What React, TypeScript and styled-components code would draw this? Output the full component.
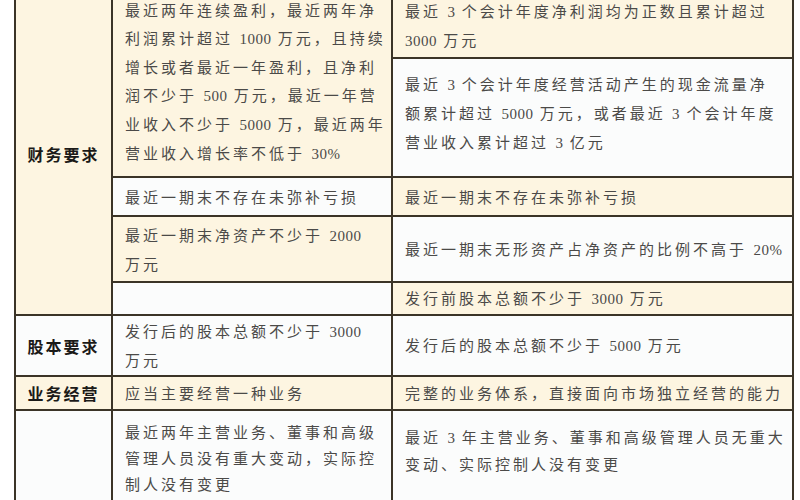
import React from "react";
import styled, { createGlobalStyle } from "styled-components";

const GlobalStyle = createGlobalStyle`
  html, body {
    margin: 0;
    padding: 0;
    background: #ffffff;
    overflow: hidden;
  }
  body {
    width: 800px;
    height: 500px;
    font-family: "Noto Sans CJK SC", "Noto Sans", sans-serif;
  }
`;

const Page = styled.div`
  width: 800px;
  height: 500px;
  overflow: hidden;
  padding-left: 14px;
  box-sizing: border-box;
`;

const Table = styled.table`
  margin-top: -8px;
  border-collapse: collapse;
  table-layout: fixed;
  width: 778px;
`;

const Row = styled.tr<{ $h: number }>`
  height: ${(p) => p.$h}px;
`;

const Cell = styled.td<{ $tone?: "beige" | "white"; $pb?: number; $lh?: number }>`
  border: 2px solid #3b3427;
  background: ${(p) => (p.$tone === "beige" ? "#fdf5e1" : "#fbfcfc")};
  padding: 0 4px ${(p) => p.$pb ?? 0}px 12px;
  vertical-align: middle;
  white-space: nowrap;
  overflow: hidden;
  color: #4b4a48;
  font-size: 15px;
  letter-spacing: 3px;
  line-height: ${(p) => p.$lh ?? 28}px;
`;

const HeadCell = styled(Cell)`
  padding: 0;
  text-align: center;
  color: #1b1a18;
  font-weight: 700;
  font-size: 16px;
  letter-spacing: 2px;
`;

const Num = styled.span`
  font-family: "Liberation Serif", "DejaVu Serif", serif;
  font-size: 15px;
  letter-spacing: 0.5px;
`;

const Lines: React.FC<{ lines: React.ReactNode[] }> = ({ lines }) => (
  <>
    {lines.map((l, i) => (
      <div key={i}>{l}</div>
    ))}
  </>
);

export default function App() {
  return (
    <>
      <GlobalStyle />
      <Page>
        <Table>
          <colgroup>
            <col style={{ width: 97 }} />
            <col style={{ width: 280 }} />
            <col style={{ width: 401 }} />
          </colgroup>
          <tbody>
            <Row $h={65}>
              <HeadCell rowSpan={5} $tone="beige">
                财务要求
              </HeadCell>
              <Cell rowSpan={2} $tone="beige" $pb={6}>
                <Lines
                  lines={[
                    "最近两年连续盈利，最近两年净",
                    <>利润累计超过 <Num>1000</Num> 万元，且持续</>,
                    "增长或者最近一年盈利，且净利",
                    <>润不少于 <Num>500</Num> 万元，最近一年营</>,
                    <>业收入不少于 <Num>5000</Num> 万，最近两年</>,
                    <>营业收入增长率不低于 <Num>30%</Num></>,
                  ]}
                />
              </Cell>
              <Cell $tone="beige">
                <Lines
                  lines={[
                    <>最近 <Num>3</Num> 个会计年度净利润均为正数且累计超过</>,
                    <><Num>3000</Num> 万元</>,
                  ]}
                />
              </Cell>
            </Row>
            <Row $h={119}>
              <Cell $tone="white" $pb={8}>
                <Lines
                  lines={[
                    <>最近 <Num>3</Num> 个会计年度经营活动产生的现金流量净</>,
                    <>额累计超过 <Num>5000</Num> 万元，或者最近 <Num>3</Num> 个会计年度</>,
                    <>营业收入累计超过 <Num>3</Num> 亿元</>,
                  ]}
                />
              </Cell>
            </Row>
            <Row $h={39}>
              <Cell $tone="white">最近一期末不存在未弥补亏损</Cell>
              <Cell $tone="beige">最近一期末不存在未弥补亏损</Cell>
            </Row>
            <Row $h={66}>
              <Cell $tone="beige">
                <Lines
                  lines={[<>最近一期末净资产不少于 <Num>2000</Num></>, "万元"]}
                />
              </Cell>
              <Cell $tone="white">
                最近一期末无形资产占净资产的比例不高于 <Num>20%</Num>
              </Cell>
            </Row>
            <Row $h={33}>
              <Cell $tone="white" />
              <Cell $tone="beige">
                发行前股本总额不少于 <Num>3000</Num> 万元
              </Cell>
            </Row>
            <Row $h={61}>
              <HeadCell $tone="white">股本要求</HeadCell>
              <Cell $tone="white">
                <Lines
                  lines={[<>发行后的股本总额不少于 <Num>3000</Num></>, "万元"]}
                />
              </Cell>
              <Cell $tone="white">
                发行后的股本总额不少于 <Num>5000</Num> 万元
              </Cell>
            </Row>
            <Row $h={34}>
              <HeadCell $tone="beige">业务经营</HeadCell>
              <Cell $tone="beige">应当主要经营一种业务</Cell>
              <Cell $tone="beige">完整的业务体系，直接面向市场独立经营的能力</Cell>
            </Row>
            <Row $h={100}>
              <HeadCell $tone="white" />
              <Cell $tone="white" $lh={26} $pb={4}>
                <Lines
                  lines={[
                    "最近两年主营业务、董事和高级",
                    "管理人员没有重大变动，实际控",
                    "制人没有变更",
                  ]}
                />
              </Cell>
              <Cell $tone="white" $lh={26} $pb={20}>
                <Lines
                  lines={[
                    <>最近 <Num>3</Num> 年主营业务、董事和高级管理人员无重大</>,
                    "变动、实际控制人没有变更",
                  ]}
                />
              </Cell>
            </Row>
          </tbody>
        </Table>
      </Page>
    </>
  );
}
